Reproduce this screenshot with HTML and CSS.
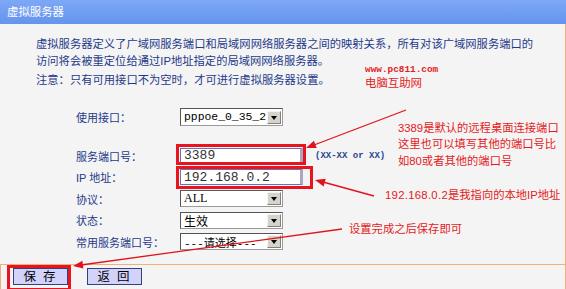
FILE: index.html
```html
<!DOCTYPE html>
<html lang="zh-CN">
<head>
  <meta charset="utf-8">
  <title>虚拟服务器</title>
  <link rel="stylesheet" href="styles.css">
</head>
<body>
<div class="page">
  <div class="title">虚拟服务器</div>

  <div class="content">
    <div class="intro">
      <p>虚拟服务器定义了广域网服务端口和局域网网络服务器之间的映射关系，所有对该广域网服务端口的<br>访问将会被重定位给通过IP地址指定的局域网网络服务器。</p>
      <p class="note">注意：只有可用接口不为空时，才可进行虚拟服务器设置。</p>
    </div>

    <!-- 表单 -->
    <div class="form">
      <div class="row">
        <label>使用接口：</label>
        <div class="select tall"><span class="mono">pppoe_0_35_2</span><b class="drop"></b></div>
      </div>
      <div class="row spaced">
        <label>服务端口号：</label>
        <input class="field" type="text" value="3389" readonly>
        <span class="hint">(XX-XX or XX)</span>
      </div>
      <div class="row">
        <label>IP 地址：</label>
        <input class="field" type="text" value="192.168.0.2" readonly>
      </div>
      <div class="row">
        <label>协议：</label>
        <div class="select"><span class="serif">ALL</span><b class="drop"></b></div>
      </div>
      <div class="row">
        <label>状态：</label>
        <div class="select"><span>生效</span><b class="drop"></b></div>
      </div>
      <div class="row">
        <label>常用服务端口号：</label>
        <div class="select"><span class="dash">---请选择---</span><b class="drop"></b></div>
      </div>
    </div>
  </div>

  <div class="footer">
    <button class="btn">保 存</button>
    <button class="btn">返 回</button>
  </div>

  <!-- 标注 -->
  <div class="marks">
    <div class="wm-url">www.pc811.com</div>
    <div class="wm-name">电脑互助网</div>

    <div class="box box-port"></div>
    <div class="box box-ip"></div>
    <div class="box box-save"></div>

    <div class="tip tip-port">3389是默认的远程桌面连接端口<br>这里也可以填写其他的端口号比<br>如80或者其他的端口号</div>
    <div class="tip tip-ip"><span class="spread">192.168.0.2</span>是我指向的本地IP地址</div>
    <div class="tip tip-save">设置完成之后保存即可</div>

    <svg class="arrows" width="566" height="289" viewBox="0 0 566 289">
      <g stroke="#e0141c" stroke-width="1.3" fill="none">
        <line x1="406" y1="110" x2="314" y2="145"/>
        <line x1="374" y1="196" x2="323" y2="182"/>
        <line x1="342" y1="229" x2="81" y2="265"/>
      </g>
      <g fill="#e0141c">
        <polygon points="306,148 316.7,148.1 313.9,140.7"/>
        <polygon points="315,180 325.7,178.8 323.6,186.5"/>
        <polygon points="73,266 83.4,268.6 82.4,260.7"/>
      </g>
    </svg>
  </div>
</div>
</body>
</html>
```

FILE: styles.css
```css
body {
  margin: 0;
  background: #f4f4f4;
  font-family: "Liberation Sans", "Noto Sans CJK SC", sans-serif;
  color: #1f3a8a;
}

.page {
  position: relative;
  width: 566px;
  height: 289px;
  overflow: hidden;
}

.title {
  height: 24px;
  line-height: 25px;
  padding-left: 7px;
  font-size: 11.4px;
  color: #fff;
  background: linear-gradient(#7ea8f6, #6494ee);
}

.content {
  width: 565px;
  border-right: 1px solid #f2b078;
  padding-bottom: 11px;
}

.intro {
  padding: 11.5px 0 0 36px;
  font-size: 11.3px;
}

.intro p {
  margin: 0;
  line-height: 17px;
}

.intro .note {
  margin-top: 2px;
}

.form {
  padding: 18px 0 0 76px;
  font-size: 11px;
}

.row {
  display: flex;
  align-items: center;
  height: 21.5px;
}

.row.spaced {
  margin-top: 17px;
}

.row label {
  width: 104px;
}

.select {
  display: flex;
  align-items: center;
  justify-content: space-between;
  box-sizing: border-box;
  width: 103px;
  height: 17px;
  padding: 0 1px 0 3px;
  background: #fff;
  border: 1px solid #9a9a9a;
  border-top-color: #555;
  border-left-color: #555;
  color: #000;
  font-size: 12px;
  font-family: "Noto Sans CJK SC", sans-serif;
}

.select.tall {
  height: 18px;
}

.select .mono {
  font-family: "Liberation Mono", monospace;
  font-size: 11.4px;
}

.select .serif {
  font-family: "Liberation Serif", serif;
  font-size: 12px;
}

.select .dash {
  font-family: "Liberation Mono", "Noto Sans CJK SC", monospace;
  font-size: 11px;
  white-space: nowrap;
}

.drop {
  position: relative;
  flex: none;
  width: 14px;
  height: 13px;
  box-sizing: border-box;
  background: #d6d3cc;
  border: 1px solid #f4f4f4;
  border-right-color: #808080;
  border-bottom-color: #808080;
}

.drop::after {
  content: "";
  position: absolute;
  left: 3px;
  top: 4px;
  border-left: 3.5px solid transparent;
  border-right: 3.5px solid transparent;
  border-top: 4px solid #000;
}

.field {
  box-sizing: border-box;
  width: 123px;
  height: 16px;
  margin: 0;
  padding: 0 0 0 3px;
  background: #fff;
  border: 1px solid #6f6fb8;
  border-right: 3px solid #a8a8c4;
  font-family: "Liberation Mono", monospace;
  font-size: 13px;
  color: #333;
  outline: none;
}

.hint {
  margin-left: 12px;
  font-family: "Liberation Mono", monospace;
  font-size: 9px;
  font-weight: bold;
  color: #2a4590;
}

.footer {
  display: flex;
  gap: 19px;
  height: 21px;
  padding: 3px 0 0 12px;
  width: 552px;
  border: 1px solid #f2b078;
}

.btn {
  width: 55px;
  height: 17px;
  padding: 0;
  background: #d2d2fb;
  border: 1px solid #33427e;
  font-family: "Noto Sans CJK SC", sans-serif;
  font-size: 12.5px;
  line-height: 14px;
  color: #000;
  letter-spacing: 2px;
}

/* 标注层 */
.marks {
  position: absolute;
  inset: 0;
  pointer-events: none;
}

.arrows {
  position: absolute;
  left: 0;
  top: 0;
}

.box {
  position: absolute;
  box-sizing: border-box;
  border: 3px solid #e8141e;
}

.box-port {
  left: 176px;
  top: 144px;
  width: 130px;
  height: 21px;
}

.box-ip {
  left: 176px;
  top: 165.5px;
  width: 137px;
  height: 23px;
}

.box-save {
  left: 7px;
  top: 265px;
  width: 64px;
  height: 26px;
}

.tip {
  position: absolute;
  color: #e41a22;
  font-family: "Liberation Sans", "Noto Sans CJK SC", sans-serif;
  font-size: 11.3px;
  line-height: 16.5px;
  white-space: nowrap;
}

.tip-port {
  left: 398px;
  top: 119.5px;
}

.tip-ip {
  left: 385px;
  top: 187px;
}

.tip-save {
  left: 349px;
  top: 221px;
}

.spread {
  letter-spacing: 0.3px;
}

.wm-url {
  position: absolute;
  left: 365px;
  top: 64px;
  font-family: "Liberation Mono", monospace;
  font-size: 9.4px;
  line-height: 11px;
  font-weight: bold;
  color: #e41a22;
}

.wm-name {
  position: absolute;
  left: 365px;
  top: 76px;
  font-family: "Noto Sans CJK SC", sans-serif;
  font-size: 11.4px;
  line-height: 13px;
  color: #e41a22;
}
```
